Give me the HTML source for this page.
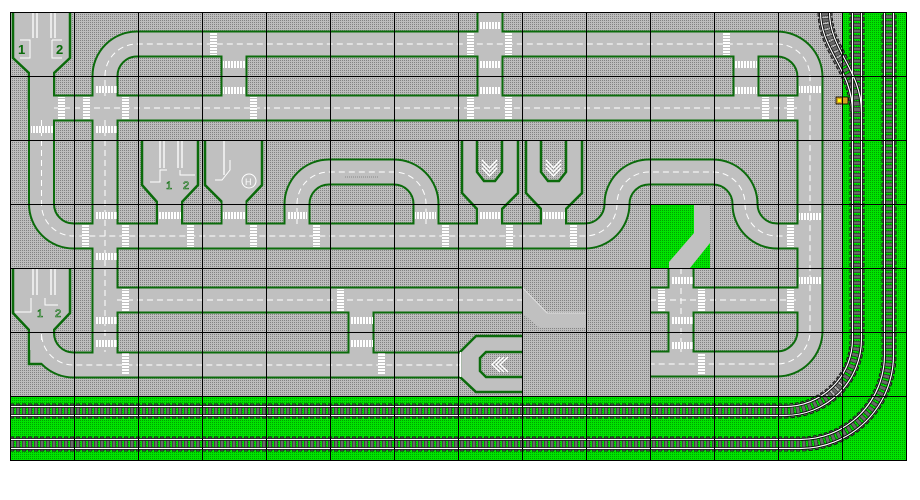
<!DOCTYPE html>
<html><head><meta charset="utf-8"><style>
html,body{margin:0;padding:0;background:#fff;}
svg{display:block;}
text{font-family:"Liberation Sans",sans-serif;}
</style></head><body>
<svg width="920" height="500" viewBox="0 0 920 500" xmlns="http://www.w3.org/2000/svg">
<defs>
<pattern id="gd" width="2" height="2" patternUnits="userSpaceOnUse"><rect width="2" height="2" fill="#bdbdbd"/><rect width="1" height="1" fill="#828282"/></pattern>
<pattern id="gr" width="2" height="2" patternUnits="userSpaceOnUse"><rect width="2" height="2" fill="#00e400"/><rect width="1" height="1" fill="#00a000"/></pattern>
<pattern id="zv" width="3" height="3" patternUnits="userSpaceOnUse"><rect width="3" height="3" fill="#c0c0c0"/><rect width="2" height="3" fill="#fff"/></pattern>
<pattern id="zh" width="3" height="3" patternUnits="userSpaceOnUse"><rect width="3" height="3" fill="#c0c0c0"/><rect width="3" height="2" fill="#fff"/></pattern>
</defs>
<rect x="10" y="12" width="896" height="448" fill="url(#gd)"/>
<rect x="10" y="396" width="896" height="64" fill="url(#gr)"/>
<rect x="842" y="12" width="64" height="448" fill="url(#gr)"/>
<rect x="650" y="205" width="60" height="63" fill="url(#gr)"/>

<g fill="none" stroke-linecap="butt">
<g stroke="#0b6b0b" stroke-width="27">
<path d="M41.5,100 V204 A32,32 0 0 0 73.5,236 H585 A32,32 0 0 0 617,204 A32,32 0 0 1 649,172 H713 A32,32 0 0 1 745,204 A32,32 0 0 0 777,236 H810"/>
<path d="M105,108 V76 A32,32 0 0 1 137,44 H777 A33,33 0 0 1 810,77 V331 A33,33 0 0 1 777,364 H650"/>
<path d="M41,108 H810"/>
<path d="M105,108 V364"/>
<path d="M41.5,350 V333 A32,32 0 0 0 73.5,365 H460"/>
<path d="M234,44 V108 M490,12 V108 M746,44 V108"/>
<path d="M105,300 H522 M650,300 H810 M681,268 V364 M361,300 V364"/>
<path d="M297,236 V204 A32,32 0 0 1 329,172 H394 A32,32 0 0 1 426,204 V236"/>
</g>
</g>
<g fill="#c0c0c0" stroke="#0b6b0b" stroke-width="2.5">
<path d="M13,12 V58 L29,73 V108 H54 V73 L70,58 V12"/>
<path d="M13,268 V313 L29,330 V364 H54 V330 L70,313 V268"/>
<path d="M142,140 V185 L157,202 V236 H182 V202 L198,185 V140"/>
<path d="M205,140 V185 L222,202 V236 H246 V202 L262,185 V140"/>
<path d="M462,140 V193 L477,209 V236 H502 V209 L518,193 V140"/>
<path d="M526,140 V193 L541,209 V236 H566 V209 L582,193 V140"/>
<path d="M522,336 H476 L460,352 V377 L476,392 H522"/>
</g>
<g fill="none" stroke-linecap="butt" stroke="#c0c0c0" stroke-width="23">
<path d="M41.5,100 V204 A32,32 0 0 0 73.5,236 H585 A32,32 0 0 0 617,204 A32,32 0 0 1 649,172 H713 A32,32 0 0 1 745,204 A32,32 0 0 0 777,236 H810"/>
<path d="M105,108 V76 A32,32 0 0 1 137,44 H777 A33,33 0 0 1 810,77 V331 A33,33 0 0 1 777,364 H650"/>
<path d="M41,108 H810"/>
<path d="M105,108 V364"/>
<path d="M41.5,350 V333 A32,32 0 0 0 73.5,365 H460"/>
<path d="M234,44 V108 M490,12 V108 M746,44 V108"/>
<path d="M105,300 H522 M650,300 H810 M681,268 V364 M361,300 V364"/>
<path d="M297,236 V204 A32,32 0 0 1 329,172 H394 A32,32 0 0 1 426,204 V236"/>
<path d="M169.5,200 V236 M234,200 V236 M489.5,205 V236 M553.5,205 V236 M41.5,60 V108 M41.5,320 V350"/>
</g>
<g fill="none" stroke="#fff" stroke-width="1" stroke-dasharray="6 4">
<path d="M41.5,120 V204 A32,32 0 0 0 73.5,236 H585 A32,32 0 0 0 617,204 A32,32 0 0 1 649,172 H713 A32,32 0 0 1 745,204 A32,32 0 0 0 777,236 H796"/>
<path d="M105,96 V76 A32,32 0 0 1 137,44 H777 A33,33 0 0 1 810,77 V331 A33,33 0 0 1 777,364 H650"/>
<path d="M54,108 H797"/>
<path d="M105,120 V352"/>
<path d="M41.5,340 V333 A32,32 0 0 0 73.5,365 H460"/>
<path d="M117,300 H522 M650,300 H797 M681,268 V352 M297,224 V204 A32,32 0 0 1 329,172 H394 A32,32 0 0 1 426,204 V224"/>
</g>
<g fill="url(#gd)" stroke="#0b6b0b" stroke-width="2.5">
<path d="M477,140 V172 L484,181 H495 L502,172 V140"/>
<path d="M541,140 V172 L548,181 H559 L566,172 V140"/>
<path d="M522,352 H486 L480,358 V371 L486,377 H522"/>
</g>
<g fill="none" stroke="#fff" stroke-width="1.3">
<path d="M482,160 L489.5,168 L497,160 M482,164 L489.5,172 L497,164 M482,168 L489.5,176 L497,168"/>
<path d="M546,160 L553.5,168 L561,160 M546,164 L553.5,172 L561,164 M546,168 L553.5,176 L561,168"/>
<path d="M500,357 L492,364.5 L500,372 M504,357 L496,364.5 L504,372 M508,357 L500,364.5 L508,372"/>
<path d="M460.5,352 V377"/>
<path d="M33,12 V38 M37,12 V38 M51,12 V38 M55,12 V38 M33,268 V295 M37,268 V295 M51,268 V295 M55,268 V295 M160,140 V168 M164,140 V168 M178,140 V168 M182,140 V168 M224,140 V175"/>
<path d="M20,40 H30 V58 H20 M52,40 H62 M52,40 V58 H62" stroke-width="1"/>
<path d="M15,312 H31 V298 M45,298 V305 H58 M150,182 H160 V170 H167 M180,170 V175 H195 M215,180 H222 L230,170 V160" stroke-width="1"/>
<circle cx="249" cy="181" r="7" stroke-width="1"/>
</g>
<polygon points="522,287 547,313 586,313 586,328 540,328 522,313" fill="#c0c0c0"/>
<polyline points="522,287 547,313 586,313" fill="none" stroke="#ddd" stroke-width="1"/>
<polygon points="694,205 710,205 710,243 690,268 669,268 669,262 694,233" fill="#c0c0c0"/>
<g font-weight="bold" fill="#0b6b0b" font-size="13">
<text x="18" y="54">1</text><text x="56" y="54">2</text>
</g>
<g fill="#e8e8e8" stroke="#0b6b0b" stroke-width="0.6" font-size="11">
<text x="37" y="317">1</text><text x="55" y="317">2</text>
<text x="166" y="189">1</text><text x="183" y="189">2</text>
<text x="245" y="185" font-size="9" fill="#fff" stroke="none">H</text>
</g>
<line x1="345" y1="177" x2="378" y2="177" stroke="#888" stroke-dasharray="1 1"/>

<g fill="url(#zh)">
<rect x="58" y="97" width="7" height="22"/><rect x="83" y="97" width="7" height="22"/><rect x="122" y="97" width="7" height="22"/>
<rect x="250" y="97" width="7" height="22"/><rect x="467" y="97" width="7" height="22"/><rect x="505" y="97" width="7" height="22"/>
<rect x="762" y="97" width="7" height="22"/><rect x="787" y="97" width="7" height="22"/>
<rect x="210" y="33" width="7" height="22"/><rect x="467" y="33" width="7" height="22"/><rect x="505" y="33" width="7" height="22"/><rect x="723" y="33" width="7" height="22"/>
<rect x="82" y="225" width="7" height="22"/><rect x="122" y="225" width="7" height="22"/><rect x="187" y="225" width="7" height="22"/><rect x="250" y="225" width="7" height="22"/>
<rect x="313" y="225" width="7" height="22"/><rect x="442" y="225" width="7" height="22"/><rect x="506" y="225" width="7" height="22"/><rect x="570" y="225" width="7" height="22"/><rect x="787" y="225" width="7" height="22"/>
<rect x="122" y="289" width="7" height="22"/><rect x="337" y="289" width="7" height="22"/><rect x="658" y="289" width="7" height="22"/><rect x="698" y="289" width="7" height="22"/><rect x="787" y="289" width="7" height="22"/>
<rect x="122" y="353" width="7" height="22"/><rect x="378" y="353" width="7" height="22"/><rect x="698" y="353" width="7" height="22"/>
</g>
<g fill="url(#zv)">
<rect x="31" y="126" width="22" height="7"/><rect x="95" y="86" width="22" height="7"/><rect x="95" y="126" width="22" height="7"/>
<rect x="223" y="61" width="22" height="7"/><rect x="223" y="87" width="22" height="7"/>
<rect x="479" y="22" width="22" height="7"/><rect x="479" y="61" width="22" height="7"/><rect x="479" y="87" width="22" height="7"/>
<rect x="735" y="61" width="22" height="7"/><rect x="735" y="87" width="22" height="7"/><rect x="799" y="86" width="22" height="7"/>
<rect x="95" y="212" width="22" height="7"/><rect x="159" y="212" width="22" height="7"/><rect x="223" y="212" width="22" height="7"/>
<rect x="287" y="212" width="20" height="7"/><rect x="415" y="212" width="21" height="7"/><rect x="479" y="212" width="22" height="7"/><rect x="543" y="212" width="22" height="7"/>
<rect x="95" y="253" width="22" height="7"/><rect x="95" y="317" width="22" height="7"/><rect x="95" y="340" width="22" height="7"/>
<rect x="351" y="317" width="22" height="7"/><rect x="351" y="340" width="22" height="7"/>
<rect x="799" y="213" width="22" height="7"/><rect x="799" y="277" width="22" height="7"/>
<rect x="671" y="277" width="22" height="7"/><rect x="671" y="317" width="22" height="7"/><rect x="671" y="342" width="22" height="7"/>
</g>

<g fill="none">
<g stroke="#1a1a1a" stroke-width="15" stroke-dasharray="4 2">
<path d="M10,411 H785 A72,72 0 0 0 857,339 V12"/>
<path d="M10,444 H800 A89,89 0 0 0 889,355 V12"/>
<path d="M857,112 C857,70 825,50 825,12"/>
</g>
<g stroke="#6a6a6a" stroke-width="13" stroke-dasharray="3 3" stroke-dashoffset="-0.5">
<path d="M10,411 H785 A72,72 0 0 0 857,339 V12"/>
<path d="M10,444 H800 A89,89 0 0 0 889,355 V12"/>
<path d="M857,112 C857,70 825,50 825,12"/>
</g>
<g stroke="#000" stroke-width="2.8">
<path d="M10,406.5 H785 A67.5,67.5 0 0 0 852.5,339 V12"/>
<path d="M10,415.5 H785 A76.5,76.5 0 0 0 861.5,339 V12"/>
<path d="M10,439.5 H800 A84.5,84.5 0 0 0 884.5,355 V12"/>
<path d="M10,448.5 H800 A93.5,93.5 0 0 0 893.5,355 V12"/>
<path d="M852.5,112 C852.5,70 820.5,50 820.5,12"/>
<path d="M861.5,112 C861.5,70 829.5,50 829.5,12"/>
</g>
<g stroke="#fff" stroke-width="1.2">
<path d="M10,406.5 H785 A67.5,67.5 0 0 0 852.5,339 V12"/>
<path d="M10,415.5 H785 A76.5,76.5 0 0 0 861.5,339 V12"/>
<path d="M10,439.5 H800 A84.5,84.5 0 0 0 884.5,355 V12"/>
<path d="M10,448.5 H800 A93.5,93.5 0 0 0 893.5,355 V12"/>
<path d="M852.5,112 C852.5,70 820.5,50 820.5,12"/>
<path d="M861.5,112 C861.5,70 829.5,50 829.5,12"/>
</g>
</g>
<rect x="836" y="97" width="12" height="7" fill="#d4a020" stroke="#000" stroke-width="0.8"/>
<rect x="838" y="99" width="3" height="3" fill="#ff0"/>

<g stroke="#000" stroke-width="1">
<path d="M10.5,12 V460 M74.5,12 V460 M138.5,12 V460 M202.5,12 V460 M266.5,12 V460 M330.5,12 V460 M394.5,12 V460 M458.5,12 V460 M522.5,12 V460 M586.5,12 V460 M650.5,12 V460 M714.5,12 V460 M778.5,12 V460 M842.5,12 V460 M906.5,12 V460"/>
<path d="M10,12.5 H907 M10,76.5 H907 M10,140.5 H907 M10,204.5 H907 M10,268.5 H907 M10,332.5 H907 M10,396.5 H907 M10,460.5 H907"/>
</g>
</svg>
</body></html>
